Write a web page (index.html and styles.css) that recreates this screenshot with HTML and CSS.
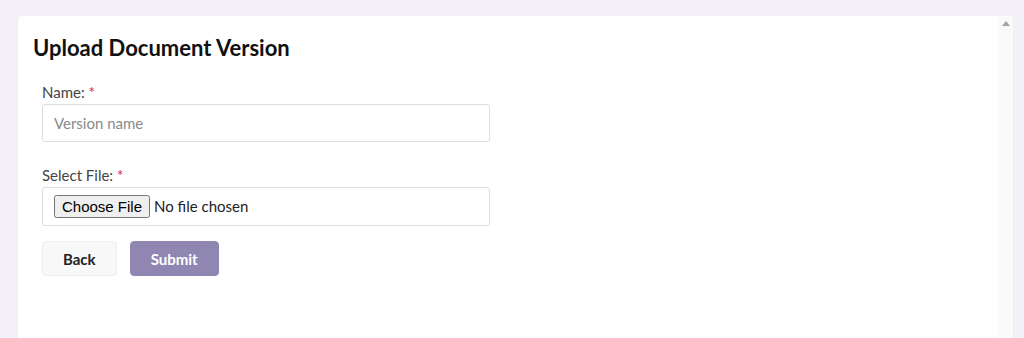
FILE: index.html
```html
<!DOCTYPE html>
<html lang="en">

<head>
    <meta charset="UTF-8" />
    <meta name="viewport" content="width=device-width, initial-scale=1.0" />
    <title>Upload Document Version</title>
    <link rel="stylesheet" href="styles.css">
</head>

<body>
    <div class="card">
        <div class="card-body">
            <h2 class="title">Upload Document Version</h2>

            <form class="upload-form" onsubmit="return false;">
                <div class="field">
                    <label for="versionName">Name: <span class="required">*</span></label>
                    <input type="text" id="versionName" class="text-input" placeholder="Version name">
                </div>

                <div class="field">
                    <label for="versionFile">Select File: <span class="required">*</span></label>
                    <div class="file-box">
                        <input type="file" id="versionFile" class="file-input">
                    </div>
                </div>

                <div class="buttons">
                    <button type="button" class="btn btn-back">Back</button>
                    <button type="submit" class="btn btn-submit">Submit</button>
                </div>
            </form>
        </div>

        <div class="scrollbar">
            <span class="scroll-arrow"></span>
        </div>
    </div>
</body>

</html>
```

FILE: styles.css
```css
body {
    font-family: Lato, "Open Sans", sans-serif;
    background-color: #f3f0fa;
    margin: 0;
    padding: 16px 11px 0 18px;
    height: 338px;
    box-sizing: border-box;
    overflow: hidden;
}

.card {
    display: flex;
    background-color: white;
    border-radius: 4px 4px 0 0;
    height: 322px;
    box-shadow: 0 0 2px rgba(0, 0, 0, 0.06);
}

.card-body {
    flex: 1;
    padding: 18px 15px 0 15px;
}

.title {
    margin: 0 0 20px 0;
    font-size: 22px;
    font-weight: 700;
    color: #111;
    line-height: 28px;
}

.upload-form {
    padding-left: 9px;
    width: 448px;
}

.field {
    margin-bottom: 23px;
}

.field:nth-child(2) {
    margin-bottom: 15px;
}

.field label {
    display: block;
    font-size: 15px;
    color: #444;
    line-height: 20px;
    margin-bottom: 2px;
}

.required {
    color: #e0242d;
}

.text-input {
    display: block;
    width: 100%;
    box-sizing: border-box;
    height: 38px;
    padding: 6px 11px;
    font-family: inherit;
    font-size: 15px;
    color: #333;
    border: 1px solid #ddd;
    border-radius: 3px;
}

.text-input::placeholder {
    color: #8a8a8a;
}

.file-box {
    height: 39px;
    box-sizing: border-box;
    border: 1px solid #ddd;
    border-radius: 3px;
    padding: 0 11px;
    display: flex;
    align-items: center;
}

.file-input {
    font-family: inherit;
    font-size: 15px;
    color: #222;
}

.buttons {
    display: flex;
    gap: 13px;
}

.btn {
    height: 35px;
    padding: 0 20px;
    font-family: inherit;
    font-size: 15px;
    font-weight: 700;
    border-radius: 4px;
    cursor: pointer;
}

.btn-back {
    background-color: #f8f8f8;
    color: #222;
    border: 1px solid #eee;
}

.btn-submit {
    background-color: #8f87b1;
    color: white;
    border: 1px solid #8f87b1;
}

.scrollbar {
    width: 15px;
    background-color: #fafafa;
    display: flex;
    justify-content: center;
    padding-top: 5px;
}

.scroll-arrow {
    width: 0;
    height: 0;
    border-left: 4px solid transparent;
    border-right: 4px solid transparent;
    border-bottom: 5px solid #a3a3a3;
}
```
